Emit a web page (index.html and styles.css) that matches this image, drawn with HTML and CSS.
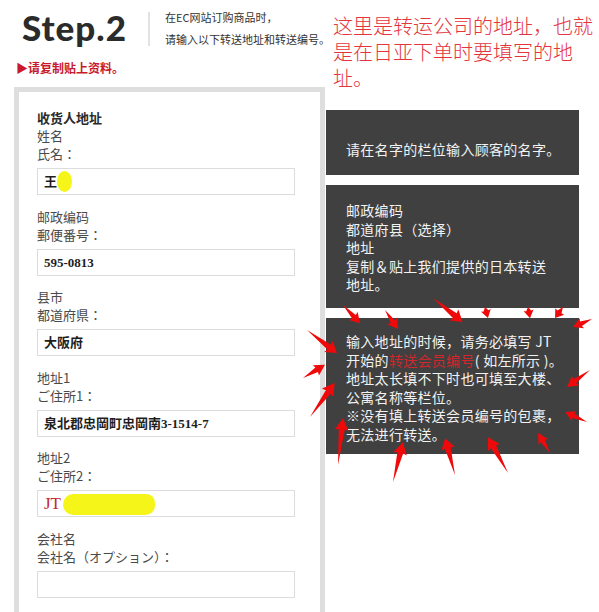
FILE: index.html
```html
<!DOCTYPE html>
<html lang="zh-CN">
<head>
<meta charset="utf-8">
<title>Step.2</title>
<link rel="stylesheet" href="styles.css">
</head>
<body>
<div class="page">
  <header class="header">
    <div class="step">Step.2</div>
    <div class="divider"></div>
    <div class="intro">在EC网站订购商品时，<br>请输入以下转送地址和转送编号。</div>
    <div class="annot">这里是转运公司的地址，也就是在日亚下单时要填写的地址。</div>
  </header>
  <div class="notice">▶请复制贴上资料。</div>
  <main class="main">
    <section class="panel">
      <div class="group">
        <div class="label"><b class="title">收货人地址</b><br>姓名<br><span class="ja" lang="ja">氏名：</span></div>
        <div class="input">王<span class="blot blot-1"></span></div>
      </div>
      <div class="group">
        <div class="label">邮政编码<br><span class="ja" lang="ja">郵便番号：</span></div>
        <div class="input">595-0813</div>
      </div>
      <div class="group">
        <div class="label">县市<br><span class="ja" lang="ja">都道府県：</span></div>
        <div class="input">大阪府</div>
      </div>
      <div class="group">
        <div class="label">地址1<br><span class="ja" lang="ja">ご住所1：</span></div>
        <div class="input">泉北郡忠岡町忠岡南3-1514-7</div>
      </div>
      <div class="group">
        <div class="label">地址2<br><span class="ja" lang="ja">ご住所2：</span></div>
        <div class="input"><span class="jt">JT</span><span class="blot blot-2"></span></div>
      </div>
      <div class="group">
        <div class="label">会社名<br><span class="ja" lang="ja">会社名（オプション）：</span></div>
        <div class="input"></div>
      </div>
      <div class="group">
        <div class="label faded">电话号码<br><span class="ja" lang="ja">電話番号：</span></div>
        <div class="input"></div>
      </div>
    </section>
    <aside class="tips">
      <div class="tip tip-1">请在名字的栏位输入顾客的名字。</div>
      <div class="tip tip-2">邮政编码<br>都道府县（选择）<br>地址<br>复制＆贴上我们提供的日本转送<br>地址。</div>
      <div class="tip tip-3">输入地址的时候，请务必填写 JT<br>开始的<span class="hl">转送会员编号</span>(&nbsp;如左所示&nbsp;)。<br>地址太长填不下时也可填至大楼、<br>公寓名称等栏位。<br>※没有填上转送会员编号的包裹，<br>无法进行转送。</div>
    </aside>
  </main>
  <svg class="arrows" width="599" height="612" viewBox="0 0 599 612" aria-hidden="true">
    <g fill="#ee0a0a">
      <path d="M0 0L16 -2.5L15 -6L25 0L15 6L16 2.5Z" transform="translate(343 305) rotate(47)"/>
      <path d="M0 0L14 -2.5L13 -6L23 0L13 6L14 2.5Z" transform="translate(385 310) rotate(56)"/>
      <path d="M0 0L28 -3L27 -7L38 0L27 7L28 3Z" transform="translate(433 298) rotate(39)"/>
      <path d="M0 0L4 -2.5L3.5 -5L11.4 0L3.5 5L4 2.5Z" transform="translate(485 307) rotate(75)"/>
      <path d="M0 0L4 -2.5L3.5 -5L11.4 0L3.5 5L4 2.5Z" transform="translate(528 307) rotate(80)"/>
      <path d="M0 0L6 -2.5L5.5 -5.5L13.6 0L5.5 5.5L6 2.5Z" transform="translate(563 307) rotate(126)"/>
      <path d="M0 0L12 -2.5L11 -5.5L20.6 0L11 5.5L12 2.5Z" transform="translate(592 319) rotate(157)"/>
      <path d="M0 0L19 -2.5L18 -6L28.6 0L18 6L19 2.5Z" transform="translate(590 370) rotate(143.5)"/>
      <path d="M0 0L15 -2.5L14 -5.5L24 0L14 5.5L15 2.5Z" transform="translate(587 422) rotate(204.4)"/>
      <path d="M0 0L14 -2.5L13 -5.5L23.3 0L13 5.5L14 2.5Z" transform="translate(550 453) rotate(-121)"/>
      <path d="M0 0L30 -3L29 -7L41 0L29 7L30 3Z" transform="translate(508 473) rotate(-119)"/>
      <path d="M0 0L28 -3L27 -7L38 0L27 7L28 3Z" transform="translate(455 475) rotate(-105)"/>
      <path d="M0 0L30 -3L29 -7L41 0L29 7L30 3Z" transform="translate(393 482) rotate(-76)"/>
      <path d="M0 0L36 -3L35 -7L47 0L35 7L36 3Z" transform="translate(338 465) rotate(-84)"/>
      <path d="M0 0L31 -3L30 -7L42 0L30 7L31 3Z" transform="translate(310 417) rotate(-54)"/>
      <path d="M0 0L16 -2.5L15 -6L25.6 0L15 6L16 2.5Z" transform="translate(303 378) rotate(-31)"/>
      <path d="M0 0L28 -3L27 -7L37.8 0L27 7L28 3Z" transform="translate(307 330) rotate(37.5)"/>
    </g>
  </svg>
</div>
</body>
</html>
```
FILE: styles.css
```css
html, body {
  margin: 0;
  padding: 0;
  background: #fff;
}
body {
  font-family: "Noto Sans CJK SC", "Noto Sans", sans-serif;
  color: #333;
  overflow: hidden;
}
.page {
  position: relative;
  width: 599px;
  height: 612px;
  overflow: hidden;
}
.header {
  display: flex;
  align-items: flex-start;
  height: 56px;
  padding-left: 22px;
}
.step {
  font-family: Lato, "Open Sans", sans-serif;
  font-weight: 900;
  font-size: 35px;
  letter-spacing: 1px;
  line-height: 40px;
  margin-top: 7px;
  color: #2b2b2b;
  width: 105px;
  white-space: nowrap;
}
.divider {
  width: 2px;
  height: 34px;
  background: #e2e2e2;
  margin: 12px 15px 0 21px;
}
.intro {
  width: 168px;
  font-size: 11px;
  line-height: 22px;
  margin-top: 6px;
  color: #333;
  white-space: nowrap;
}
.annot {
  width: 266px;
  font-size: 20px;
  line-height: 26px;
  margin-top: 13px;
  color: #e4343c;
  font-weight: 300;
}
.notice {
  margin-top: 3px;
  padding-left: 16px;
  height: 18px;
  line-height: 18px;
  font-size: 12px;
  font-weight: 700;
  color: #c8192e;
}
.main {
  display: flex;
  align-items: flex-start;
  margin-top: 10px;
  padding-left: 14px;
}
.panel {
  box-sizing: border-box;
  width: 311px;
  border: 5px solid #dedede;
  border-bottom: none;
  padding: 17px 25px 0 18px;
}
.group {
  margin-bottom: 12.5px;
}
.label {
  font-size: 13px;
  line-height: 18px;
  color: #4a4a4a;
  margin-bottom: 5px;
  white-space: nowrap;
}
.ja {
  font-family: "Noto Sans CJK JP", "Noto Sans CJK SC", sans-serif;
}
.title {
  font-weight: 700;
  color: #2a2a2a;
}
.faded {
  color: #d4d4d4;
}
.input {
  box-sizing: border-box;
  width: 258px;
  height: 27px;
  border: 1px solid #dcdcdc;
  padding: 1px 0 0 6px;
  line-height: 24px;
  font-family: "Liberation Serif", "Noto Sans CJK SC", serif;
  font-weight: 700;
  font-size: 13px;
  color: #1e1e1e;
  white-space: nowrap;
  overflow: hidden;
}
.jt {
  font-weight: 400;
  font-size: 17px;
  color: #c4262e;
  vertical-align: top;
}
.blot {
  display: inline-block;
  background: #f6f51a;
  vertical-align: top;
}
.blot-1 {
  width: 15px;
  height: 21px;
  border-radius: 50%;
  margin-top: 1px;
}
.blot-2 {
  width: 92px;
  height: 21px;
  border-radius: 11px 9px 10px 11px;
  margin-top: 2px;
  margin-left: 2px;
}
.tips {
  display: flex;
  flex-direction: column;
  gap: 10px;
  width: 253px;
  margin-left: 1px;
  padding-top: 23px;
}
.tip {
  box-sizing: border-box;
  background: #404040;
  color: #f2f2f2;
  font-size: 14px;
  letter-spacing: 0.3px;
  line-height: 18.5px;
  padding-left: 20px;
  white-space: nowrap;
}
.tip-1 {
  height: 65px;
  padding-top: 30px;
}
.tip-2 {
  height: 123px;
  padding-top: 16px;
}
.tip-3 {
  height: 136px;
  padding-top: 14px;
  line-height: 18.6px;
}
.hl {
  color: #d0262c;
}
.arrows {
  position: absolute;
  left: 0;
  top: 0;
  pointer-events: none;
}
```
